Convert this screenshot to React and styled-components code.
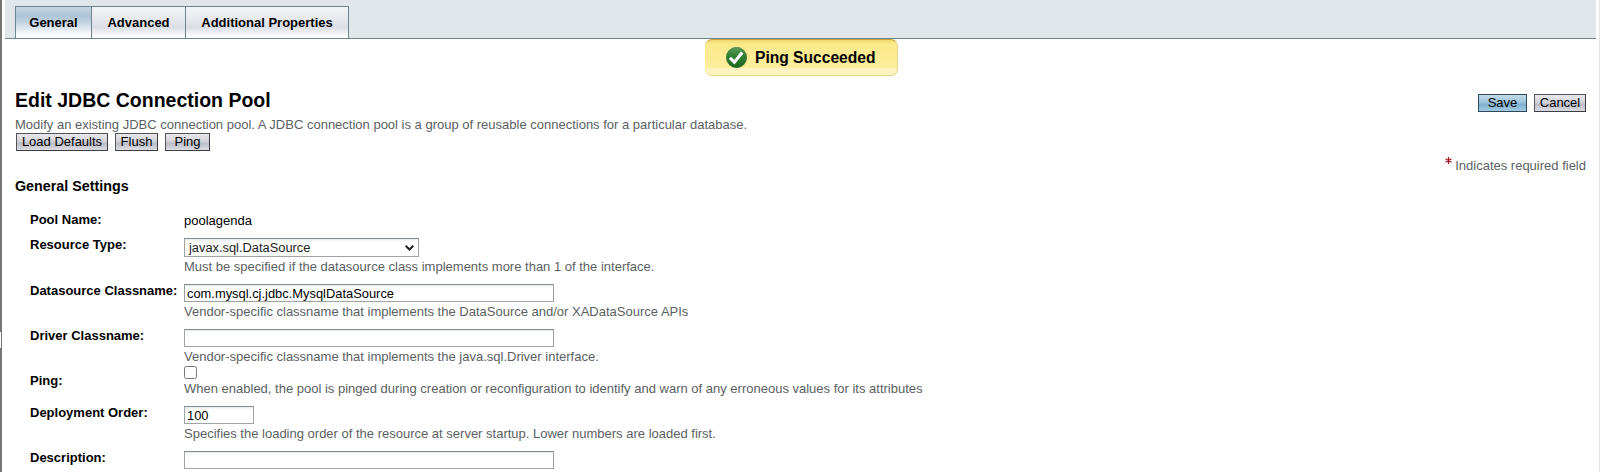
import React from "react";
import styled, { createGlobalStyle, css } from "styled-components";

const Global = createGlobalStyle`
  html, body { margin: 0; background: #fff; }
  body { overflow: hidden; }
  * { box-sizing: border-box; }
`;

const Page = styled.div`
  position: relative;
  display: flex;
  height: 472px;
  font: 13px/16px "Liberation Sans", Arial, sans-serif;
  color: #000;
`;
const Splitter = styled.div`
  flex: 0 0 2px;
  background: #757575;
  padding-top: 332px;
`;
const SplitterHandle = styled.div`
  height: 16px;
  width: 1px;
  background: #fff;
`;
const Content = styled.main`
  flex: 1;
  padding: 0 3px;
`;
const Edge = styled.div`
  flex: 0 0 1px;
  background: #e4e4e4;
`;
const TabBar = styled.nav`
  display: flex;
  align-items: flex-end;
  height: 39px;
  padding-left: 10px;
  background: #e1e6ea;
  border-bottom: 1px solid #6c858c;
`;
const Tab = styled.a`
  width: ${(p) => p.$width}px;
  height: 32px;
  border: solid #6c858c;
  border-width: 1px 1px 0 0;
  padding-top: 8px;
  text-align: center;
  font-weight: bold;
  background: linear-gradient(#f3f4f6 0%, #e5e7ec 45%, #dadde5 65%, #f5f6f9 88%, #fff 100%);
  ${(p) => p.$active && css`
    border-left-width: 1px;
    background: linear-gradient(#c6d5e4 0%, #aec4d8 30%, #c3d3e2 50%, #f1f5f9 82%, #fff 100%);
  `}
`;
const Alert = styled.div`
  position: absolute;
  left: 705px;
  top: 39px;
  display: flex;
  align-items: center;
  gap: 8px;
  width: 193px;
  height: 37px;
  padding-left: 21px;
  border: solid #e5d283;
  border-width: 1px 1px 1px 0;
  border-top-color: #c2a83f;
  border-radius: 7px;
  background: linear-gradient(#efd970 0, #fbe98a 4px, #fdee9c 28px, #fdf4c2 28px, #fdf4c2 100%);
  font-size: 15.6px;
  font-weight: bold;
`;
const Header = styled.header`
  display: flex;
  justify-content: space-between;
  height: 75px;
  padding: 0 10px;
`;
const Title = styled.h1`
  margin: 49px 0 0;
  font-size: 19.5px;
  line-height: 24px;
`;
const Hint = styled.p`
  margin: 0;
  color: #5b5f63;
  white-space: nowrap;
`;
const Intro = styled.div`
  height: 19px;
  padding: 3px 10px 0;
`;
const Actions = styled.div`
  display: flex;
  gap: 7px;
  padding: ${(p) => p.$pad};
`;
const Button = styled.button`
  width: ${(p) => p.$width}px;
  height: 18px;
  padding: 0 0 1px;
  border: 1px solid #54545c;
  border-right-color: #3c3c44;
  border-bottom-color: #3c3c44;
  background: linear-gradient(#e8e8ec 0%, #d3d3da 45%, #bdbdc7 60%, #dcdce2 100%);
  font: 13px/15px "Liberation Sans", Arial, sans-serif;
  color: #000;
  white-space: nowrap;
  ${(p) => p.$primary && css`
    border-color: #2c4659;
    background: linear-gradient(#c3dcea 0%, #9cc3da 45%, #7eb0ce 60%, #a4cbe0 100%);
  `}
`;
const Required = styled.div`
  display: flex;
  justify-content: flex-end;
  gap: 3px;
  height: 23px;
  padding: 7px 10px 0;
`;
const Star = styled.svg`
  margin-top: -4px;
`;
const SectionTitle = styled.h2`
  margin: 0;
  padding: 3px 10px 0;
  height: 37px;
  font-size: 14.3px;
  line-height: 18px;
`;
const Row = styled.div`
  display: grid;
  grid-template-columns: 154px 1fr;
  height: ${(p) => p.$height}px;
  padding: 0 0 0 25px;
`;
const Label = styled.label`
  padding-top: ${(p) => p.$top ?? 1}px;
  font-weight: bold;
  white-space: nowrap;
`;
const Field = styled.div`
  padding-top: 2px;
`;
const Input = styled.input`
  display: block;
  width: ${(p) => p.$width || 370}px;
  height: 18px;
  margin-bottom: 2px;
  padding: 0 2px;
  border: 1px solid #a0a3a5;
  border-top-color: #85898c;
  border-radius: 0;
  background: linear-gradient(#e9edf0, #fff 3px);
  font: 12.9px/16px "Liberation Sans", Arial, sans-serif;
  color: #000;
  outline: none;
`;
const Select = styled.div`
  display: flex;
  justify-content: space-between;
  align-items: center;
  width: 235px;
  height: 19px;
  margin-bottom: 2px;
  padding: 0 3px 0 4px;
  border: 1px solid #a0a3a5;
  border-top-color: #85898c;
  background: linear-gradient(#e9edf0, #fff 3px);
  font-size: 12.85px;
  color: #222;
`;
const Checkbox = styled.input`
  appearance: none;
  display: block;
  width: 13px;
  height: 13px;
  margin: 0 0 2px;
  border: 1px solid #767676;
  border-radius: 2.5px;
  background: #fff;
`;

const CheckIcon = () => (
  <svg width="21" height="21" viewBox="0 0 21 21">
    <defs>
      <linearGradient id="ok" x1="0" y1="0" x2="0" y2="1">
        <stop offset="0" stopColor="#5d9c5c" />
        <stop offset=".45" stopColor="#2f7f31" />
        <stop offset="1" stopColor="#1d661f" />
      </linearGradient>
    </defs>
    <circle cx="10.5" cy="10.5" r="10.2" fill="url(#ok)" stroke="#2c6b30" strokeWidth=".6" />
    <path d="M4 10.8 8.4 15.2 16.2 5.6" fill="none" stroke="#fff" strokeWidth="3.2" />
  </svg>
);
const Chevron = () => (
  <svg width="11" height="8" viewBox="0 0 11 8">
    <path d="M1.7 1.7 5.5 5.5 9.3 1.7" fill="none" stroke="#222" strokeWidth="2" />
  </svg>
);

export default function App() {
  return (
    <Page>
      <Global />
      <Splitter><SplitterHandle /></Splitter>
      <Content>
        <TabBar>
          <Tab $active $width={77}>General</Tab>
          <Tab $width={94}>Advanced</Tab>
          <Tab $width={163}>Additional Properties</Tab>
        </TabBar>
        <Header>
          <Title>Edit JDBC Connection Pool</Title>
          <Actions $pad="55px 0 2px">
            <Button $primary $width={49}>Save</Button>
            <Button $width={52}>Cancel</Button>
          </Actions>
        </Header>
        <Intro>
          <Hint>Modify an existing JDBC connection pool. A JDBC connection pool is a group of reusable connections for a particular database.</Hint>
        </Intro>
        <Actions $pad="0 11px">
          <Button $width={92}>Load Defaults</Button>
          <Button $width={43}>Flush</Button>
          <Button $width={45}>Ping</Button>
        </Actions>
        <Required>
          <Star width="7" height="13" viewBox="0 0 7 13">
            <path d="M3.5 3v7M.5 4.8l6 3.4M6.5 4.8l-6 3.4" stroke="#ad1220" strokeWidth="1.2" />
          </Star>
          <Hint>Indicates required field</Hint>
        </Required>
        <SectionTitle>General Settings</SectionTitle>
        <Row $height={25}>
          <Label>Pool Name:</Label>
          <Field>poolagenda</Field>
        </Row>
        <Row $height={46}>
          <Label>Resource Type:</Label>
          <Field>
            <Select>javax.sql.DataSource<Chevron /></Select>
            <Hint>Must be specified if the datasource class implements more than 1 of the interface.</Hint>
          </Field>
        </Row>
        <Row $height={45}>
          <Label>Datasource Classname:</Label>
          <Field>
            <Input defaultValue="com.mysql.cj.jdbc.MysqlDataSource" />
            <Hint>Vendor-specific classname that implements the DataSource and/or XADataSource APIs</Hint>
          </Field>
        </Row>
        <Row $height={37}>
          <Label>Driver Classname:</Label>
          <Field>
            <Input />
            <Hint>Vendor-specific classname that implements the java.sql.Driver interface.</Hint>
          </Field>
        </Row>
        <Row $height={40}>
          <Label $top={9}>Ping:</Label>
          <Field>
            <Checkbox type="checkbox" />
            <Hint>When enabled, the pool is pinged during creation or reconfiguration to identify and warn of any erroneous values for its attributes</Hint>
          </Field>
        </Row>
        <Row $height={45}>
          <Label>Deployment Order:</Label>
          <Field>
            <Input $width={70} defaultValue="100" />
            <Hint>Specifies the loading order of the resource at server startup. Lower numbers are loaded first.</Hint>
          </Field>
        </Row>
        <Row $height={23}>
          <Label>Description:</Label>
          <Field><Input /></Field>
        </Row>
      </Content>
      <Edge />
      <Alert><CheckIcon />Ping Succeeded</Alert>
    </Page>
  );
}
